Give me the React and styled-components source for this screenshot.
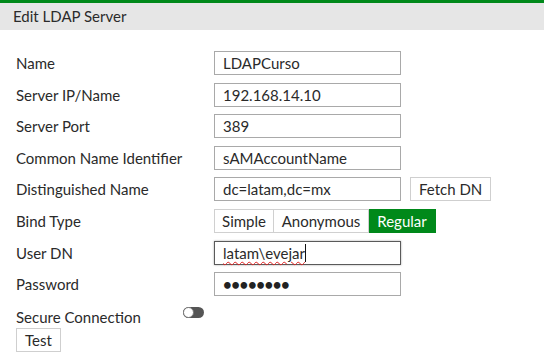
import React from 'react';
import styled, { createGlobalStyle } from 'styled-components';

const GlobalStyle = createGlobalStyle`
  body {
    margin: 0;
    background: #fff;
    font-family: Lato, "Open Sans", sans-serif;
    color: #2a2a2a;
  }
`;

const Header = styled.div`
  border-top: 3px solid #00891a;
  background-color: #e6e6e6;
  height: 27px;
  line-height: 27px;
  padding-left: 13px;
  font-size: 15px;
  color: #2b2b2b;
`;

const Form = styled.div`
  display: flex;
  flex-direction: column;
  gap: 7.6px;
  padding: 21px 0 0 16px;
`;

const Row = styled.div`
  display: flex;
  align-items: center;
  height: 24px;
  margin-top: ${props => props.extra || 0}px;
`;

const Label = styled.div`
  flex: 0 0 ${props => props.width || 198}px;
  font-size: 15px;
`;

const Field = styled.div`
  box-sizing: border-box;
  width: 187px;
  height: 24px;
  border: 1px solid ${props => props.focused ? '#5a5a5a' : '#a9a9a9'};
  box-shadow: ${props => props.focused ? '0 0 2px rgba(0,0,0,0.35)' : 'none'};
  padding: 0 8px;
  font-size: 15px;
  line-height: 22px;
  white-space: nowrap;
`;

const Misspelled = styled.span`
  text-decoration: underline wavy #e02020;
  text-decoration-thickness: 1px;
  text-underline-offset: 2px;
  border-right: 1px solid #111;
`;

const Dots = styled.span`
  font-size: 15px;
  letter-spacing: -0.4px;
  font-weight: 700;
  color: #222;
`;

const Button = styled.button`
  box-sizing: border-box;
  height: 24px;
  margin-left: ${props => props.offset || 0}px;
  padding: 0 ${props => props.pad || 8}px;
  border: 1px solid #cfcfcf;
  background: #fff;
  font-family: inherit;
  font-size: 15px;
  color: #2a2a2a;
`;

const Segmented = styled.div`
  display: flex;
  height: 24px;
`;

const Segment = styled.div`
  box-sizing: border-box;
  width: ${props => props.w}px;
  height: 24px;
  line-height: 22px;
  text-align: center;
  font-size: 15px;
  border: 1px solid ${props => props.active ? '#00891a' : '#d0d0d0'};
  border-left-width: ${props => props.first ? 1 : 0}px;
  background: ${props => props.active ? '#00891a' : '#fff'};
  color: ${props => props.active ? '#fff' : '#2a2a2a'};
`;

const Toggle = styled.div`
  position: relative;
  box-sizing: border-box;
  width: 21px;
  height: 11px;
  border-radius: 6px;
  background: #555;
  margin-top: -8px;
`;

const Knob = styled.div`
  position: absolute;
  left: 0;
  top: 0;
  box-sizing: border-box;
  width: 11px;
  height: 11px;
  border-radius: 50%;
  background: #fff;
  border: 1px solid #777;
`;

const fields = [
  ['Name', 'LDAPCurso'],
  ['Server IP/Name', '192.168.14.10'],
  ['Server Port', '389'],
  ['Common Name Identifier', 'sAMAccountName'],
];

export default function App() {
  return (
    <>
      <GlobalStyle />
      <Header>Edit LDAP Server</Header>
      <Form>
        {fields.map(([label, value]) => (
          <Row key={label}>
            <Label>{label}</Label>
            <Field>{value}</Field>
          </Row>
        ))}
        <Row>
          <Label>Distinguished Name</Label>
          <Field>dc=latam,dc=mx</Field>
          <Button offset={9}>Fetch DN</Button>
        </Row>
        <Row>
          <Label>Bind Type</Label>
          <Segmented>
            <Segment first w={60}>Simple</Segment>
            <Segment w={95}>Anonymous</Segment>
            <Segment active w={67}>Regular</Segment>
          </Segmented>
        </Row>
        <Row>
          <Label>User DN</Label>
          <Field focused><Misspelled>latam\evejar</Misspelled></Field>
        </Row>
        <Row>
          <Label>Password</Label>
          <Field><Dots>••••••••</Dots></Field>
        </Row>
        <Row extra={1}>
          <Label width={167}>Secure Connection</Label>
          <Toggle><Knob /></Toggle>
        </Row>
        <Row extra={-8}>
          <Button pad={8}>Test</Button>
        </Row>
      </Form>
    </>
  );
}
